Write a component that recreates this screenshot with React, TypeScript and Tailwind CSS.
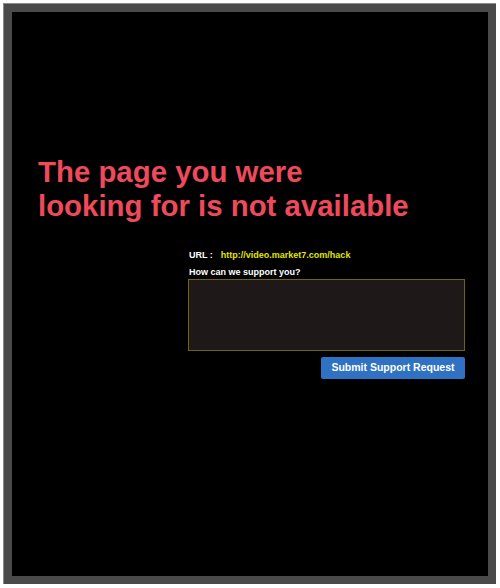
import React from "react";

export default function App() {
  return (
    <div className="w-[500px] h-[588px] bg-white p-[3px] pr-[4px] pb-[4px]" style={{ fontFamily: '"Liberation Sans", Arial, sans-serif' }}>
      <div className="w-full h-full bg-[#4a4a4a] p-[8px] border-t border-l border-[#8a8a8a]">
        <div className="w-full h-full bg-black pt-[143px] pl-[26px] pr-[23px]">
          <h1 className="text-[29.4px] leading-[34px] font-bold text-[#ee4a5c]">
            The page you were
            <br />
            looking for is not available
          </h1>
          <div className="ml-[150px] mt-[27px] flex flex-col">
            <div className="flex items-center text-[9px] font-bold leading-[11px]">
              <span className="text-white ml-[1px]">URL :</span>
              <span className="ml-[8px] text-[#e4e400]">http://video.market7.com/hack</span>
            </div>
            <div className="mt-[6px] ml-[1px] text-[9px] font-bold leading-[11px] text-white">How can we support you?</div>
            <div className="mt-[1px] h-[72px] bg-[#1f1818] border border-[#6e6608]" />
            <div className="flex justify-end mt-[6px]">
              <button className="w-[144px] h-[22px] bg-[#2f71c2] rounded-[2px] text-white text-[10.5px] font-bold">
                Submit Support Request
              </button>
            </div>
          </div>
        </div>
      </div>
    </div>
  );
}
